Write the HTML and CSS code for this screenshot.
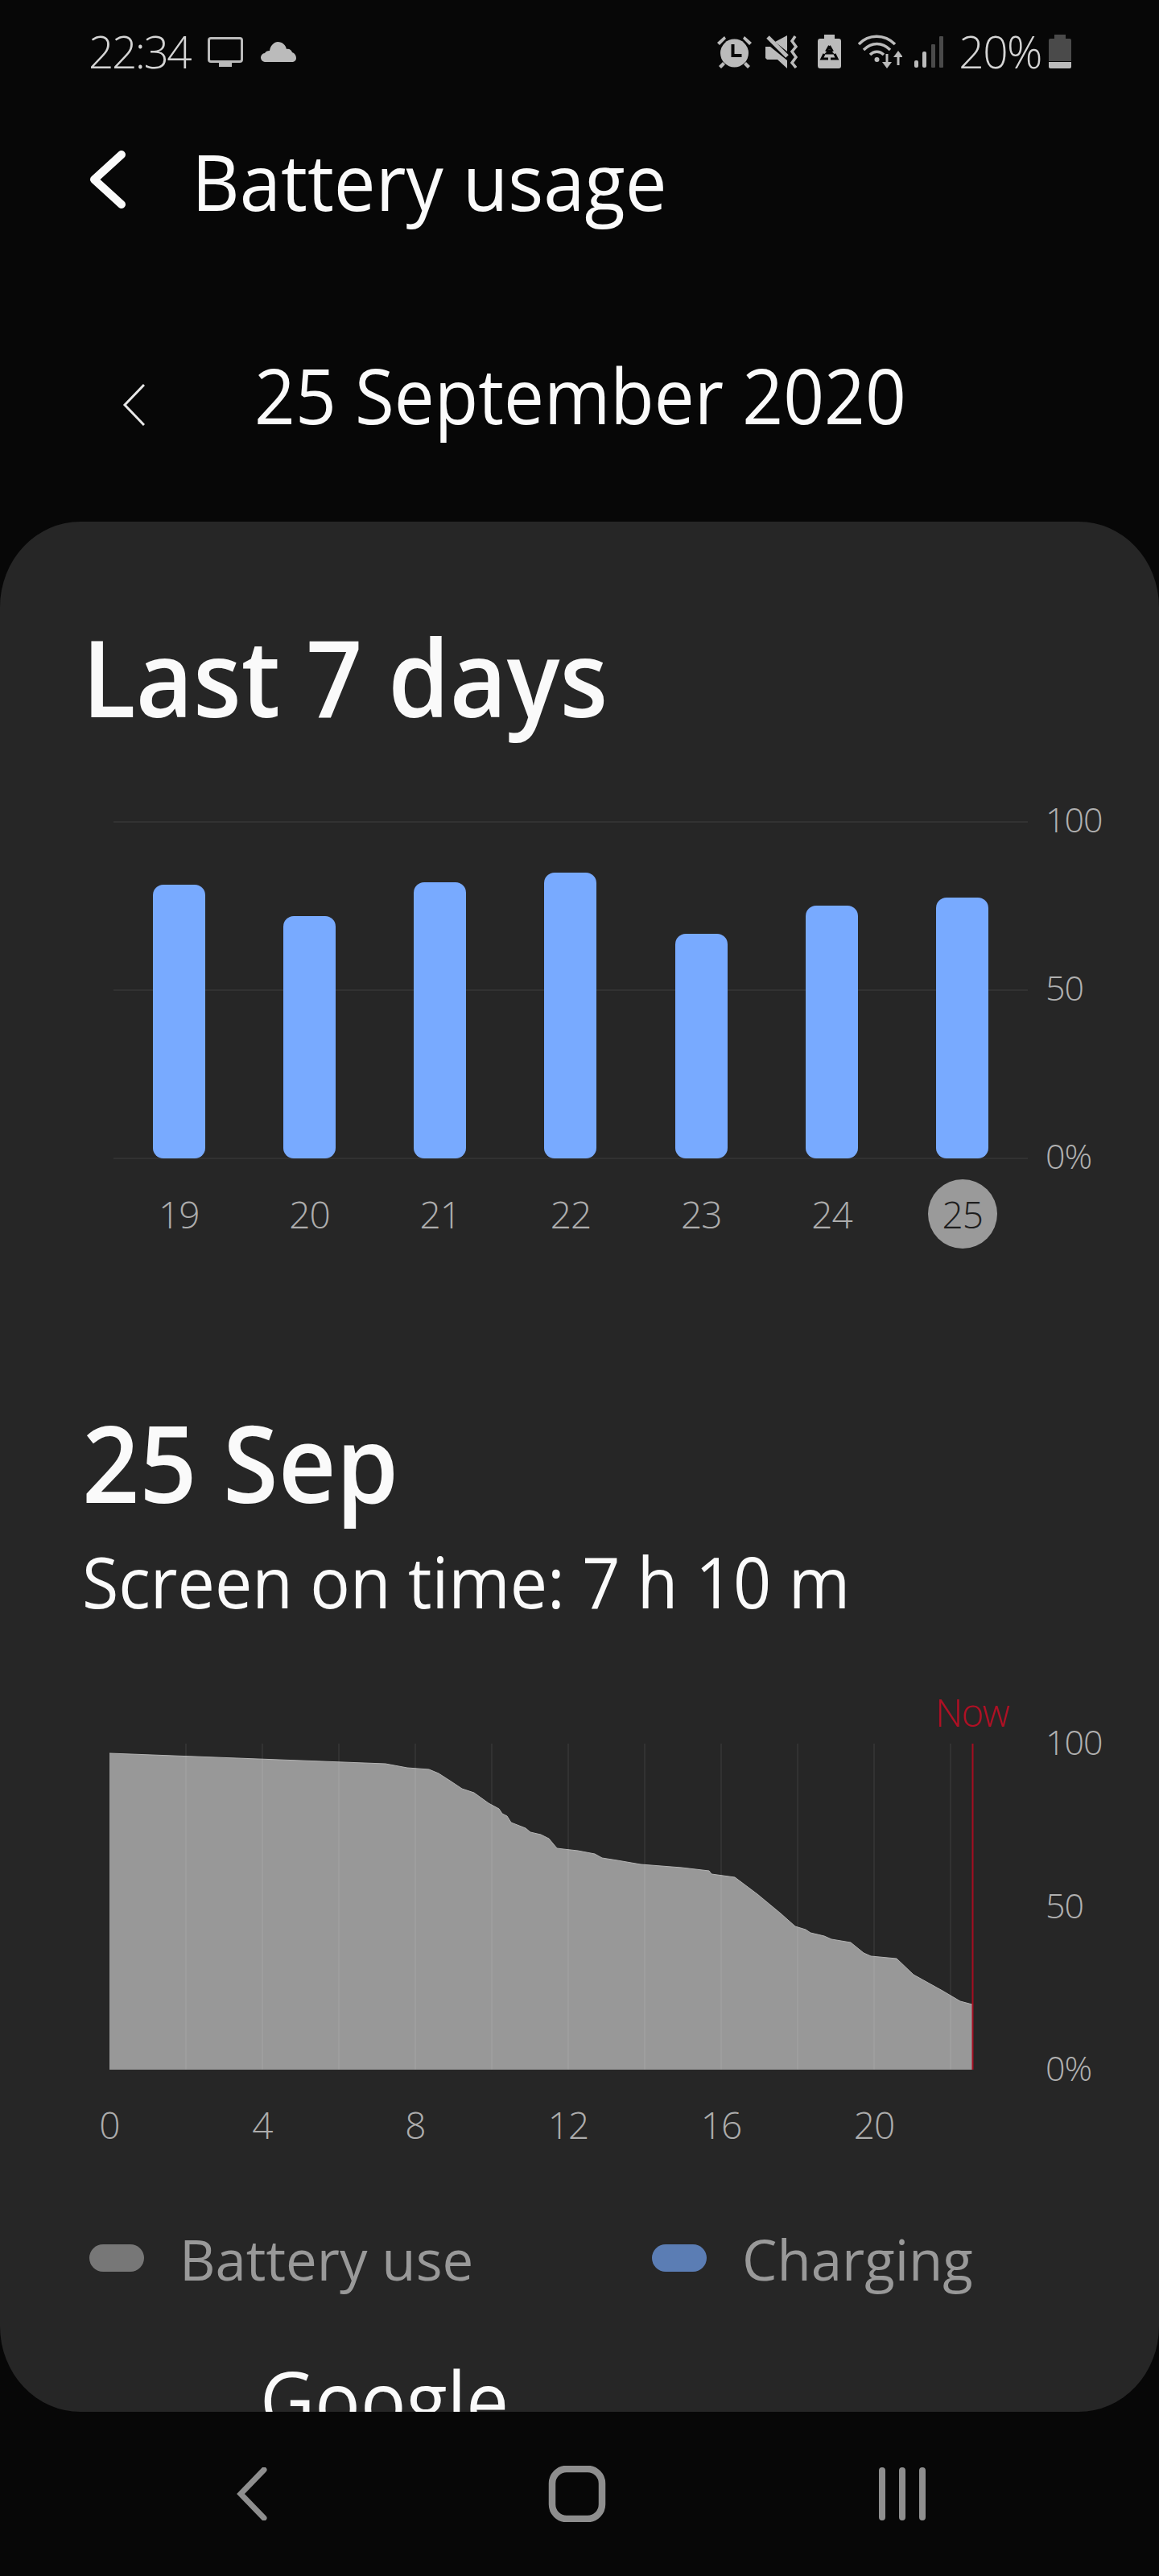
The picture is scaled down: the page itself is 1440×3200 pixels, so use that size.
FILE: index.html
```html
<!DOCTYPE html>
<html lang="en">
<head>
<meta charset="UTF-8" />
<meta name="viewport" content="width=device-width, initial-scale=1" />
<title>Battery usage</title>
<link rel="stylesheet" href="styles.css">
</head>
<body>

<!-- Status bar -->
<div class="status-bar">
  <div class="status-group">
    <span class="status-text">22:34</span>
    <svg width="44" height="37" viewBox="0 0 44 37"><rect x="1.5" y="1.5" width="41" height="29" rx="2.5" fill="none" stroke="#bbb" stroke-width="3"/><rect x="14" y="32" width="16" height="5" fill="#bbb"/></svg>
    <svg width="44" height="25" viewBox="0 0 44 25"><path d="M6 25a5.500 5.500 0 0 1-1-11c1-2 3-3 6-3 1-7 6-11 10-11 6 0 10 4 11 9 3-1 6 1 7 4 3 1 5 4 5 7a5 5 0 0 1-4 5z" fill="#bbb"/></svg>
  </div>
  <div class="status-group status-right">
    <svg width="45" height="41" viewBox="0 0 45 41"><path d="M1 9 10 1l2 3-8 8zM44 9 35 1l-2 3 8 8zM8 33l-5 5 3 3 5-5zM37 33l5 5-3 3-5-5z" fill="#bbb"/><circle cx="22.500" cy="22" r="17.500" fill="#bbb"/><path d="M20.500 11v14h11" fill="none" stroke="#080808" stroke-width="4"/></svg>
    <svg class="icon-mute" width="42" height="41" viewBox="0 0 42 41"><path d="M0 14h6l21 17v10L15 30H2l-2-2zM12 8 27 0v20z" fill="#bbb"/><path d="M3 2 27 26" stroke="#bbb" stroke-width="5"/><path d="M37 1l-4 6 5 7-5 6 5 7-5 7 5 6" fill="none" stroke="#bbb" stroke-width="3.500"/></svg>
    <svg class="icon-saver" width="29" height="42" viewBox="0 0 29 42"><path d="M8 0h13v5h5a3 3 0 0 1 3 3v31a3 3 0 0 1-3 3H3a3 3 0 0 1-3-3V8a3 3 0 0 1 3-3h5z" fill="#bbb"/><path d="M14.500 14l-4 7M14.500 14l4 7M8 24l-3 6h8M21 24l3 6h-8M14.500 20l-3 3 3 0 3 0z" fill="none" stroke="#080808" stroke-width="3"/></svg>
    <svg class="icon-wifi" width="55" height="43" viewBox="0 0 55 43"><path d="M1 12C13 -1 33 -1 46 12M7 19c10-10 23-10 33 0M15 25c5-5 12-5 17 0" fill="none" stroke="#bbb" stroke-width="3.500"/><circle cx="23.500" cy="31" r="3" fill="#bbb"/><path d="M36 24v12M50 26v12" stroke="#bbb" stroke-width="3"/><path d="M30 34h12l-6 8zM44 28h12l-6-8z" fill="#bbb"/></svg>
    <svg class="icon-signal" width="36" height="39" viewBox="0 0 36 39"><rect x="0" y="30" width="5" height="9" rx="2" fill="#bbb"/><rect x="10" y="19" width="5" height="20" rx="2" fill="#bbb"/><rect x="21" y="10" width="5" height="29" rx="1" fill="#4a4a4a"/><rect x="31" y="0" width="5" height="39" rx="1" fill="#4a4a4a"/></svg>
    <span class="status-text status-percent">20%</span>
    <svg class="icon-battery" width="28" height="42" viewBox="0 0 28 42"><path d="M7 0h14v5h5a2 2 0 0 1 2 2v26H0V7a2 2 0 0 1 2-2h5z" fill="#4a4a4a"/><path d="M0 34h28v6a2 2 0 0 1-2 2H2a2 2 0 0 1-2-2z" fill="#bbb"/></svg>
  </div>
</div>

<!-- Toolbar -->
<header class="toolbar">
  <svg width="48" height="74" viewBox="0 0 48 74"><path d="M41 6 7 37l34 31" fill="none" stroke="#fafafa" stroke-width="10" stroke-linecap="round" stroke-linejoin="round"/></svg>
  <h1 class="squeeze">Battery usage</h1>
</header>

<div class="date-row">
  <svg class="date-prev" width="28" height="52" viewBox="0 0 28 52"><path d="M27 1 3 26l24 25" fill="none" stroke="#e8e8e8" stroke-width="3"/></svg>
  <span class="squeeze date-text">25 September 2020</span>
</div>

<!-- Main card -->
<main class="card">

  <section class="week">
    <h2 class="squeeze">Last 7 days</h2>
    <div class="bar-chart">
      <div class="bar-plot">
        <div class="grid-lines"><i></i><i></i><i></i></div>
        <div class="bars" id="bars"></div>
      </div>
      <div class="y-labels y-labels-bars"><span>100</span><span>50</span><span>0%</span></div>
    </div>
    <div class="day-labels" id="days"></div>
  </section>

  <section class="today">
    <h2 class="squeeze">25 Sep</h2>
    <p class="squeeze screen-time">Screen on time: 7 h 10 m</p>
    <div class="area-chart">
      <svg width="1197" height="480" viewBox="0 0 1197 480" id="area">
        <text x="1060" y="45" class="now-label">Now</text>
      </svg>
      <div class="y-labels y-labels-area"><span>100</span><span>50</span><span>0%</span></div>
    </div>
    <div class="hour-labels">
      <span>0</span><span>4</span><span>8</span><span>12</span><span>16</span><span>20</span>
    </div>
    <div class="legend">
      <div class="legend-item"><i class="swatch swatch-use"></i><span class="squeeze">Battery use</span></div>
      <div class="legend-item"><i class="swatch swatch-charge"></i><span class="squeeze">Charging</span></div>
    </div>
    <p class="squeeze app-name">Google</p>
  </section>

</main>

<!-- Navigation bar -->
<nav class="nav-bar">
  <svg width="40" height="66" viewBox="0 0 40 66"><path d="M35 3 6 33l29 30" fill="none" stroke="#8e8e8e" stroke-width="7" stroke-linecap="round"/></svg>
  <svg width="72" height="70" viewBox="0 0 72 70"><rect x="5" y="4" width="62" height="62" rx="18" fill="none" stroke="#8e8e8e" stroke-width="8.500"/></svg>
  <svg width="60" height="66" viewBox="0 0 60 66"><path d="M5 4v58M30 4v58M55 4v58" stroke="#8e8e8e" stroke-width="8" stroke-linecap="round"/></svg>
</nav>

<script>
  // Last 7 days
  const week = [
    { day: 19, height: 340 },
    { day: 20, height: 301 },
    { day: 21, height: 343 },
    { day: 22, height: 355 },
    { day: 23, height: 279 },
    { day: 24, height: 314 },
    { day: 25, height: 324, selected: true }
  ];

  const bars = document.getElementById('bars');
  const days = document.getElementById('days');
  week.forEach(d => {
    const bar = document.createElement('div');
    bar.className = 'bar';
    bar.style.height = d.height + 'px';
    bars.appendChild(bar);

    const label = document.createElement('span');
    label.className = d.selected ? 'day day-selected' : 'day';
    label.textContent = d.day;
    days.appendChild(label);
  });

  // Battery level through the day, in page pixels
  const level = [
    [136,2178],[479,2191],[506,2196],[533,2198],[545,2203],[559,2212],[574,2222],[589,2227],
    [607,2240],[620,2247],[624,2253],[630,2256],[635,2264],[653,2271],[659,2276],[672,2279],
    [682,2284],[692,2296],[700,2297],[718,2299],[739,2303],[748,2308],[767,2311],[796,2316],
    [847,2320],[881,2324],[884,2328],[913,2332],[941,2353],[970,2377],[988,2393],[1001,2397],
    [1007,2401],[1024,2405],[1033,2409],[1057,2413],[1073,2426],[1082,2430],[1114,2433],
    [1135,2453],[1171,2473],[1193,2486],[1208,2490]
  ];
  const originX = 102, originY = 2100, chartTop = 66, chartBottom = 471;
  const area = document.getElementById('area');
  const ns = 'http://www.w3.org/2000/svg';

  function add(name, attrs) {
    const el = document.createElementNS(ns, name);
    Object.keys(attrs).forEach(k => el.setAttribute(k, attrs[k]));
    area.appendChild(el);
  }

  const line = level.map(p => (p[0] - originX) + ',' + (p[1] - originY)).join(' ');
  add('polygon', { points: '34,' + chartBottom + ' ' + line + ' 1106,' + chartBottom, fill: '#989898' });
  add('polyline', { points: line, fill: 'none', stroke: '#b4b4b4', 'stroke-width': 1 });

  // Hour lines, every two hours
  for (let x = 129; x <= 1079; x += 95) {
    add('line', { x1: x, x2: x, y1: chartTop, y2: chartBottom, stroke: '#fff', 'stroke-opacity': 0.08, 'stroke-width': 1.5 });
  }
  add('line', { x1: 1106.5, x2: 1106.5, y1: chartTop, y2: chartBottom, stroke: '#a50d20', 'stroke-width': 2 });
</script>

</body>
</html>
```

FILE: styles.css
```css
/* Reset */
* {
  margin: 0; padding: 0; box-sizing: border-box;
}
body {
  width: 1440px;
  height: 3200px;
  overflow: hidden;
  background: #070707;
  color: #fafafa;
  font-family: 'Open Sans', 'Noto Sans', sans-serif;
}
svg {
  display: block;
  flex: none;
}
/* The text is drawn a little narrower than the font */
.squeeze {
  display: block;
  width: max-content;
  transform: scaleX(var(--narrow, 0.93));
  transform-origin: left center;
}

/* Status bar */
.status-bar {
  height: 128px;
  padding: 0 109px 0 110px;
  display: flex;
  justify-content: space-between;
  align-items: center;
}
.status-group {
  display: flex;
  align-items: center;
  gap: 22px;
}
.status-right {
  gap: 0;
}
.status-text {
  font-size: 55px;
  font-weight: 300;
  color: #d4d4d4;
  line-height: 48px;
  letter-spacing: -2.5px;
}
.icon-mute { margin-left: 16px; }
.icon-saver { margin-left: 23px; }
.icon-wifi { margin-left: 21px; }
.icon-signal { margin-left: 15px; }
.status-percent { margin-left: 19px; letter-spacing: -1.5px; }
.icon-battery { margin-left: 9px; }

/* Toolbar */
.toolbar {
  height: 190px;
  padding-left: 110px;
  display: flex;
  align-items: center;
  gap: 80px;
}
.toolbar h1 {
  --narrow: 0.952;
  font-size: 97px;
  font-weight: 400;
  line-height: 120px;
  margin-top: 2px;
}
.date-row {
  margin-top: 122px;
  height: 100px;
  padding-left: 152px;
  display: flex;
  align-items: center;
  gap: 136px;
}
.date-prev {
  margin-top: 26px;
}
.date-text {
  --narrow: 0.937;
  font-size: 95px;
  line-height: 100px;
}

/* Main card */
.card {
  margin-top: 108px;
  height: 2348px;
  background: #262626;
  border-radius: 100px / 106px;
  overflow: hidden;
  padding-left: 102px;
}
.week h2, .today h2 {
  font-weight: 600;
  line-height: 160px;
}
.week {
  padding-top: 112px;
}
.week h2 {
  --narrow: 0.93;
  font-size: 132px;
}
.bar-chart {
  margin-top: 100px;
  margin-left: 39px;
  display: flex;
  gap: 22px;
}
.bar-plot {
  position: relative;
  width: 1136px;
  height: 420px;
}
.grid-lines {
  position: absolute;
  inset: 0;
  display: flex;
  flex-direction: column;
  justify-content: space-between;
}
.grid-lines i {
  display: block;
  height: 2px;
  background: #323232;
}
.bars {
  position: absolute;
  inset: 0 0 1px 0;
  display: grid;
  grid-template-columns: repeat(7, 1fr);
  align-items: end;
  justify-items: center;
}
.bar {
  width: 65px;
  background: #78aaff;
  border-radius: 13px;
}
.y-labels {
  display: flex;
  flex-direction: column;
  justify-content: space-between;
  font-size: 43px;
  font-weight: 300;
  line-height: 40px;
  letter-spacing: -1px;
  color: #b0b0b0;
}
.y-labels-bars {
  height: 458px;
  margin-top: -22px;
}
.day-labels {
  margin-left: 39px;
  margin-top: 9px;
  width: 1136px;
  display: grid;
  grid-template-columns: repeat(7, 1fr);
  justify-items: center;
}
.day {
  width: 86px;
  height: 86px;
  display: flex;
  align-items: center;
  justify-content: center;
  font-size: 46px;
  font-weight: 300;
  letter-spacing: -1px;
  color: #adadad;
}
.day-selected {
  background: #9a9a9a;
  border-radius: 50%;
  color: #1e1e1e;
}

/* Today */
.today {
  margin-top: 185px;
}
.today h2 {
  --narrow: 0.938;
  font-size: 133px;
}
.screen-time {
  --narrow: 0.938;
  margin-top: 13px;
  font-size: 88px;
  line-height: 110px;
}
.area-chart {
  margin-top: 81px;
  display: flex;
}
.now-label {
  font-size: 47px;
  font-weight: 300;
  letter-spacing: -1.5px;
  fill: #b00f24;
}
.y-labels-area {
  height: 445px;
  margin-top: 44px;
}
.hour-labels {
  margin-top: 20px;
  padding-left: 2px;
  font-size: 46px;
  font-weight: 300;
  line-height: 60px;
  letter-spacing: -1px;
  color: #adadad;
  display: grid;
  grid-template-columns: repeat(6, 190px);
}
.hour-labels span {
  width: 64px;
  text-align: center;
}
.legend {
  margin-top: 92px;
  margin-left: 9px;
  display: flex;
  font-size: 70px;
  color: #999;
  line-height: 90px;
}
.legend-item {
  --narrow: 0.985;
  flex: none;
  width: 699px;
  display: flex;
  align-items: center;
  gap: 44px;
}
.swatch {
  display: block;
  width: 68px;
  height: 34px;
  border-radius: 17px;
  margin-top: -2px;
}
.swatch-use {
  background: #777;
}
.swatch-charge {
  background: #5b7db4;
}
.app-name {
  --narrow: 0.94;
  margin-left: 221px;
  margin-top: 74px;
  font-size: 100px;
  line-height: 110px;
}

/* Navigation bar */
.nav-bar {
  height: 204px;
  padding-left: 111px;
  display: grid;
  grid-template-columns: repeat(3, 404px);
  justify-items: center;
  align-items: center;
}
```
